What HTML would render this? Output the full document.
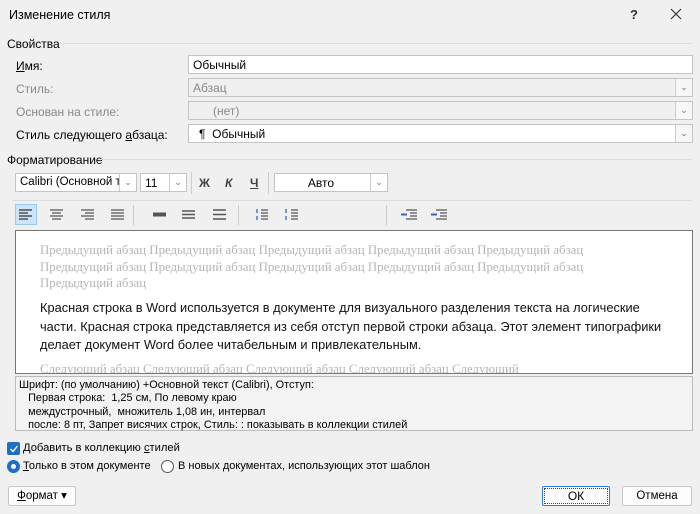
<!DOCTYPE html><html><head><meta charset="utf-8"><style>
*{box-sizing:border-box;margin:0;padding:0}
body{width:700px;height:514px;background:#f0f0f0;font-family:"Liberation Sans",sans-serif;font-size:12px;color:#000;position:relative;overflow:hidden}
.a{position:absolute;white-space:nowrap}
.f{position:absolute;border:1px solid #c4c4c4;background:#fff;height:19px;padding:2px 0 0 4px}
.dis{background:#f0f0f0;color:#888}
.dd{position:absolute;right:0;top:0;width:17px;height:17px;border-left:1px solid #ccc;color:#777;font-size:9px;text-align:center;line-height:17px;background:#f7f7f7}
.line{position:absolute;height:1px;background:#dcdcdc}
.btn{position:absolute;border:1px solid #c8c8c8;background:#fdfdfd;text-align:center;height:20px;line-height:18px;border-radius:2px}
.gray{color:#b5b5b5;font-family:"Liberation Serif",serif;font-size:12.85px}
svg{position:absolute}
</style></head><body>
<div class="a" style="left:9px;top:8px;font-size:12.5px">Изменение стиля</div>
<div class="a" style="left:630px;top:7px;font-size:13px;font-weight:bold;color:#333">?</div>
<svg style="left:670px;top:8px" width="12" height="12"><path d="M1 1L11 11M11 1L1 11" stroke="#333" stroke-width="1.2"/></svg>
<div class="a" style="left:7px;top:37px">Свойства</div><div class="line" style="left:60px;right:8px;top:43px"></div>
<div class="a" style="left:16px;top:59px"><u>И</u>мя:</div>
<div class="a" style="left:16px;top:82px;color:#888">Стиль:</div>
<div class="a" style="left:16px;top:105px;color:#888">Основан на стиле:</div>
<div class="a" style="left:16px;top:128px">Стиль следующего <u>а</u>бзаца:</div>
<div class="f" style="left:188px;top:55px;width:505px">Обычный</div>
<div class="f dis" style="left:188px;top:78px;width:505px">Абзац<div class="dd">&#8964;</div></div>
<div class="f dis" style="left:188px;top:101px;width:505px;padding-left:24px">(нет)<div class="dd">&#8964;</div></div>
<div class="f" style="left:188px;top:124px;width:505px;padding-left:10px">¶&nbsp; Обычный<div class="dd">&#8964;</div></div>
<div class="a" style="left:7px;top:153px">Форматирование</div><div class="line" style="left:100px;right:8px;top:159px"></div>
<div class="f" style="left:15px;top:173px;width:122px;height:19px;overflow:hidden;font-size:11.5px">Calibri (Основной те<div class="dd" style="background:#fff">&#8964;</div></div>
<div class="f" style="left:140px;top:173px;width:47px">11<div class="dd" style="background:#fff">&#8964;</div></div>
<div class="line" style="left:191px;top:172px;width:1px;height:22px;background:#ccc"></div>
<div class="a" style="left:199px;top:176px;font-weight:bold;color:#444">Ж</div>
<div class="a" style="left:225px;top:176px;font-weight:bold;font-style:italic;color:#444">К</div>
<div class="a" style="left:250px;top:176px;font-weight:bold;color:#444;text-decoration:underline">Ч</div>
<div class="line" style="left:268px;top:172px;width:1px;height:22px;background:#ccc"></div>
<div class="f" style="left:274px;top:173px;width:114px;text-align:center;padding:2px 20px 0 0">Авто<div class="dd" style="background:#fff">&#8964;</div></div>
<div class="line" style="left:12px;right:8px;top:200px"></div>
<div style="position:absolute;left:15px;top:204px;width:22px;height:21px;background:#cce4f7;border:1px solid #99c9ef"></div>
<svg style="left:18px;top:209px" width="600" height="12" stroke="#555" stroke-width="1.3">
<path d="M1 1h13M1 4h9M1 7h13M1 10h9" stroke="#333"/>
<path d="M32 1h13M34 4h9M32 7h13M34 10h9"/>
<path d="M63 1h13M67 4h9M63 7h13M67 10h9"/>
<path d="M93 1h13M93 4h13M93 7h13M93 10h13"/>
<path d="M135 4.5h13M135 6.5h13" stroke-width="2"/>
<path d="M164 2h13M164 5.5h13M164 9h13" stroke-width="1.5"/>
<path d="M195 1h13M195 5.5h13M195 10h13" stroke-width="1.5"/>
<path d="M243 1h7M243 4h7M243 7h7M243 10h7"/>
<path d="M239 0v4M239 7v4" stroke="#2a6cc0"/>
<path d="M273 1h7M273 4h7M273 7h7M273 10h7"/>
<path d="M268 0v4M268 7v4" stroke="#2a6cc0"/>
<path d="M388 1h11M392 4h7M392 7h7M388 10h11"/><path d="M383 5.5h6" stroke="#2a6cc0" stroke-width="2"/>
<path d="M418 1h11M422 4h7M422 7h7M418 10h11"/><path d="M413 5.5h6" stroke="#2a6cc0" stroke-width="2"/>
</svg>
<div class="line" style="left:133px;top:205px;width:1px;height:20px;background:#ccc"></div>
<div class="line" style="left:238px;top:205px;width:1px;height:20px;background:#ccc"></div>
<div class="line" style="left:386px;top:205px;width:1px;height:20px;background:#ccc"></div>
<div style="position:absolute;left:15px;top:230px;width:678px;height:144px;background:#fff;border:1px solid #777;overflow:hidden">
<div class="a gray" style="left:24px;top:11px;line-height:16.5px">Предыдущий абзац Предыдущий абзац Предыдущий абзац Предыдущий абзац Предыдущий абзац<br>Предыдущий абзац Предыдущий абзац Предыдущий абзац Предыдущий абзац Предыдущий абзац<br>Предыдущий абзац</div>
<div class="a" style="left:24px;top:68px;font-size:12.8px;line-height:18.5px;color:#111">Красная строка в Word используется в документе для визуального разделения текста на логические<br>части. Красная строка представляется из себя отступ первой строки абзаца. Этот элемент типографики<br>делает документ Word более читабельным и привлекательным.</div>
<div class="a gray" style="left:24px;top:131px">Следующий абзац Следующий абзац Следующий абзац Следующий абзац Следующий</div>
</div>
<div style="position:absolute;left:15px;top:376px;width:678px;height:55px;background:#f3f3f3;border:1px solid #bbb"></div>
<div class="a" style="left:19px;top:379px;font-size:10.9px;line-height:13.3px">Шрифт: (по умолчанию) +Основной текст (Calibri), Отступ:<br>&nbsp;&nbsp;&nbsp;Первая строка:&nbsp; 1,25 см, По левому краю<br>&nbsp;&nbsp;&nbsp;междустрочный,&nbsp; множитель 1,08 ин, интервал<br>&nbsp;&nbsp;&nbsp;после: 8 пт, Запрет висячих строк, Стиль: : показывать в коллекции стилей</div>
<div style="position:absolute;left:7px;top:442px;width:13px;height:13px;background:#1f6fc5;border-radius:2px"></div>
<svg style="left:9px;top:444px" width="10" height="10"><path d="M1.5 5l2.5 2.5L8.5 2" stroke="#fff" stroke-width="1.3" fill="none"/></svg>
<div class="a" style="left:23px;top:442px;font-size:11.2px">Добавить в коллекцию <u>с</u>тилей</div>
<div style="position:absolute;left:7px;top:460px;width:13px;height:13px;border-radius:50%;background:#1f6fc5"></div>
<div style="position:absolute;left:11px;top:464px;width:5px;height:5px;border-radius:50%;background:#fff"></div>
<div class="a" style="left:23px;top:460px;font-size:11px"><u>Т</u>олько в этом документе</div>
<div style="position:absolute;left:161px;top:460px;width:13px;height:13px;border-radius:50%;border:1px solid #555;background:#fff"></div>
<div class="a" style="left:178px;top:460px;font-size:11px">В новых документах, использующих этот шаблон</div>
<div class="btn" style="left:8px;top:486px;width:68px;font-size:11.5px"><u>Ф</u>ормат ▾</div>
<div class="btn" style="left:542px;top:486px;width:68px;border:1px solid #2a7ad8;outline:1px dotted #444;outline-offset:-3px">ОК</div>
<div class="btn" style="left:622px;top:486px;width:70px;font-size:11.5px">Отмена</div>
</body></html>
